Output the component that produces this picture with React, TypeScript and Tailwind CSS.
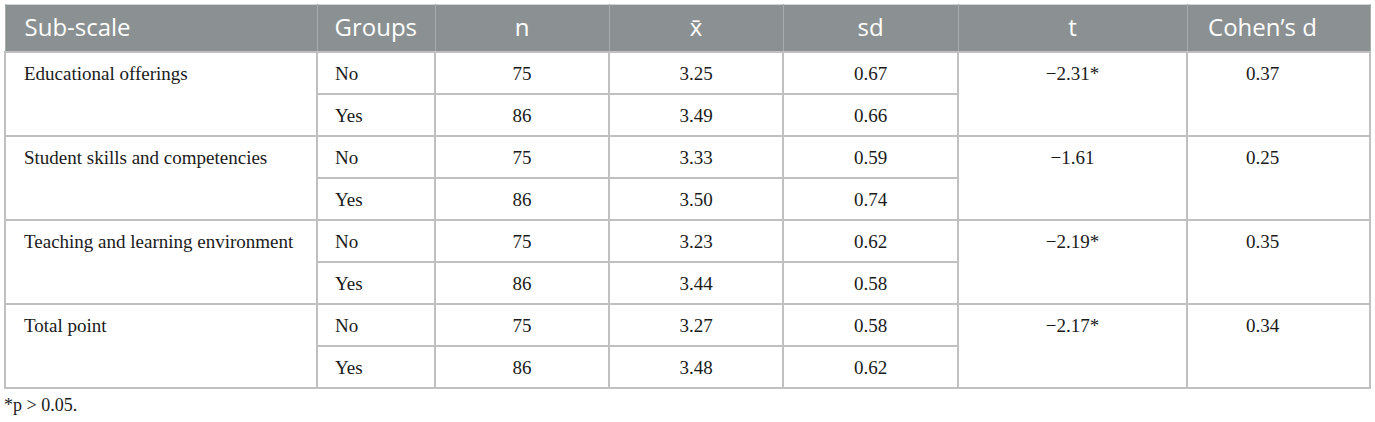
const rows = [
  { label: "Educational offerings", t: "−2.31*", d: "0.37", no: ["75", "3.25", "0.67"], yes: ["86", "3.49", "0.66"] },
  { label: "Student skills and competencies", t: "−1.61", d: "0.25", no: ["75", "3.33", "0.59"], yes: ["86", "3.50", "0.74"] },
  { label: "Teaching and learning environment", t: "−2.19*", d: "0.35", no: ["75", "3.23", "0.62"], yes: ["86", "3.44", "0.58"] },
  { label: "Total point", t: "−2.17*", d: "0.34", no: ["75", "3.27", "0.58"], yes: ["86", "3.48", "0.62"] },
];

const serif = "font-['Liberation_Serif','Times_New_Roman',serif]";

export default function App() {
  return (
    <div className="min-h-screen bg-white">
      <div className="pl-[4px] pt-[4px]">
        <table className="w-[1365px] table-fixed border-collapse">
          <colgroup>
            <col className="w-[312px]" />
            <col className="w-[118px]" />
            <col className="w-[174px]" />
            <col className="w-[174px]" />
            <col className="w-[175px]" />
            <col className="w-[229px]" />
            <col className="w-[183px]" />
          </colgroup>
          {/* Header */}
          <thead>
            <tr className="bg-[#8b9192] text-[24px] leading-[1.2] font-['Open_Sans',sans-serif] text-white border-t border-[#d3d6d6]">
              <th className="h-[47px] pl-[19px] text-left font-normal border-x border-[#a7abac]">Sub-scale</th>
              <th className="pl-[17px] text-left font-normal border-x border-[#a7abac]">Groups</th>
              <th className="text-center font-normal border-x border-[#a7abac]">n</th>
              <th className="text-center font-normal border-x border-[#a7abac]">x̄</th>
              <th className="text-center font-normal border-x border-[#a7abac]">sd</th>
              <th className="text-center font-normal border-x border-[#a7abac]">t</th>
              <th className="pr-[32px] text-center font-normal border-x border-[#a7abac]">Cohen’s d</th>
            </tr>
          </thead>
          {/* Body */}
          <tbody className={`${serif} text-[19px] leading-[1.2] text-[#1a1a1a]`}>
            {rows.map((r) => (
              <>
                <tr key={r.label + "-no"}>
                  <td rowSpan={2} className="align-top pt-[10px] pl-[18px] border-2 border-[#c0c0c0]">{r.label}</td>
                  <td className="h-[42px] align-top pt-[10px] pl-[17px] border-2 border-[#c0c0c0]">No</td>
                  {r.no.map((v, i) => (
                    <td key={i} className="align-top pt-[10px] text-center border-2 border-[#c0c0c0]">{v}</td>
                  ))}
                  <td rowSpan={2} className="align-top pt-[10px] text-center border-2 border-[#c0c0c0]">{r.t}</td>
                  <td rowSpan={2} className="align-top pt-[10px] pr-[32px] text-center border-2 border-[#c0c0c0]">{r.d}</td>
                </tr>
                <tr key={r.label + "-yes"}>
                  <td className="h-[42px] align-top pt-[10px] pl-[17px] border-2 border-[#c0c0c0]">Yes</td>
                  {r.yes.map((v, i) => (
                    <td key={i} className="align-top pt-[10px] text-center border-2 border-[#c0c0c0]">{v}</td>
                  ))}
                </tr>
              </>
            ))}
          </tbody>
        </table>
        <p className={`${serif} text-[18px] leading-[1.2] text-[#1a1a1a] pt-[6px]`}>*p &gt; 0.05.</p>
      </div>
    </div>
  );
}
